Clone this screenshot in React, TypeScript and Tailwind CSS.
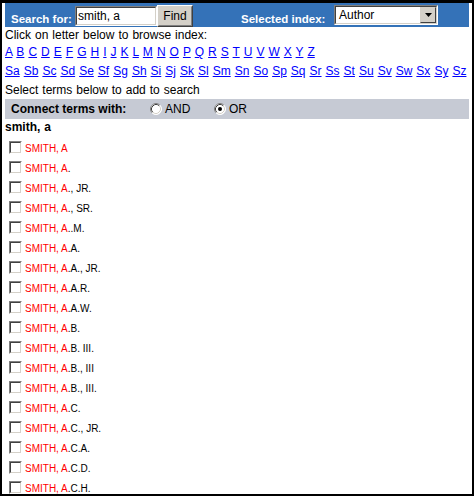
import React, { Fragment } from "react";

const Checkbox = () => (
  <span className="mt-[2px] ml-[4px] box-border block h-[13px] w-[13px] shrink-0 border border-solid border-t-[#808080] border-l-[#808080] border-b-white border-r-white">
    <span className="box-border block h-full w-full border border-solid border-t-[#404040] border-l-[#404040] border-b-[#d4d0c8] border-r-[#d4d0c8] bg-white" />
  </span>
);

const Radio = ({ checked }: { checked?: boolean }) => (
  <svg width="12" height="12" viewBox="0 0 12 12" className="block shrink-0">
    <circle cx="6" cy="6" r="5.5" fill="#ffffff" />
    <path d="M2.11 9.89 A5.5 5.5 0 0 1 9.89 2.11" fill="none" stroke="#808080" strokeWidth="1" />
    <path d="M9.89 2.11 A5.5 5.5 0 0 1 2.11 9.89" fill="none" stroke="#ffffff" strokeWidth="1" />
    <path d="M2.82 9.18 A4.5 4.5 0 0 1 9.18 2.82" fill="none" stroke="#404040" strokeWidth="1" />
    <path d="M9.18 2.82 A4.5 4.5 0 0 1 2.82 9.18" fill="none" stroke="#d4d0c8" strokeWidth="1" />
    {checked && <circle cx="6" cy="6" r="2" fill="#000000" />}
  </svg>
);

const letters = "ABCDEFGHIJKLMNOPQRSTUVWXYZ".split("");
const sLetters = "abcdefghijklmnopqrstuvwxyz".split("").map((c) => "S" + c);

const entries = [
  "",
  ".",
  "., JR.",
  "., SR.",
  "..M.",
  ".A.",
  ".A., JR.",
  ".A.R.",
  ".A.W.",
  ".B.",
  ".B. III.",
  ".B., III",
  ".B., III.",
  ".C.",
  ".C., JR.",
  ".C.A.",
  ".C.D.",
  ".C.H.",
];

const LinkRow = ({ items }: { items: string[] }) => (
  <div className="whitespace-nowrap text-[12px] leading-[19px] [word-spacing:0.67px]">
    {items.map((l, i) => (
      <Fragment key={l}>
        {i > 0 && " "}
        <a href="#" className="text-[#0000ff] underline">
          {l}
        </a>
      </Fragment>
    ))}
  </div>
);

export default function App() {
  return (
    <div className="box-border h-[496px] w-[474px] overflow-hidden border-solid border-black border-t-[3px] border-x-2 border-b-2 bg-white px-[3px] text-black [font-family:'Liberation_Sans',Arial,sans-serif]">
      {/* header bar */}
      <div className="flex h-[24px] items-start bg-[#3472b8]">
        <span className="ml-[6px] mt-[8px] w-[64px] text-[11.5px] font-bold leading-[16px] text-white">
          Search for:
        </span>
        <div className="mt-[3px] box-border h-[20px] w-[82px] border border-solid border-t-[#808080] border-l-[#808080] border-b-white border-r-white">
          <div className="box-border flex h-full w-full items-center border border-solid border-t-[#404040] border-l-[#404040] border-b-[#d4d0c8] border-r-[#d4d0c8] bg-white pl-[1px] text-[12px] leading-[14px]">
            smith, a
          </div>
        </div>
        <div className="mt-[2px] box-border h-[22px] w-[36px] border border-solid border-t-white border-l-white border-b-[#404040] border-r-[#404040]">
          <div className="box-border flex h-full w-full items-center justify-center border border-solid border-t-[#d4d0c8] border-l-[#d4d0c8] border-b-[#808080] border-r-[#808080] bg-[#d4d0c8] text-[12px] leading-[14px]">
            Find
          </div>
        </div>
        <span className="ml-[48px] mt-[8px] w-[93px] text-[11.5px] font-bold leading-[16px] text-white">
          Selected index:
        </span>
        <div className="mt-[2px] box-border h-[20px] w-[104px] border border-solid border-t-[#808080] border-l-[#808080] border-b-white border-r-white">
          <div className="box-border flex h-full w-full items-stretch border border-solid border-t-[#404040] border-l-[#404040] border-b-[#d4d0c8] border-r-[#d4d0c8] bg-white">
            <span className="flex flex-1 items-center pl-[3px] text-[12px] leading-[14px]">Author</span>
            <span className="box-border flex w-[16px] items-center justify-center border border-solid border-t-[#d4d0c8] border-l-[#d4d0c8] border-b-[#404040] border-r-[#404040] bg-[#d4d0c8]">
              <svg width="7" height="4" viewBox="0 0 7 4" className="block">
                <path d="M0 0 H7 L3.5 4 Z" fill="#000000" />
              </svg>
            </span>
          </div>
        </div>
      </div>

      <div className="text-[12px] leading-[16px] [word-spacing:0.67px]">
        Click on letter below to browse index:
      </div>
      <LinkRow items={letters} />
      <LinkRow items={sLetters} />
      <div className="pt-[1px] text-[12px] leading-[17px] [word-spacing:0.67px]">
        Select terms below to add to search
      </div>

      {/* connect bar */}
      <div className="flex h-[20px] items-center bg-[#c6cad4] text-[12px] leading-[14px]">
        <span className="ml-[6px] w-[139px] font-bold">Connect terms with:</span>
        <Radio />
        <span className="ml-[3px] w-[49px]">AND</span>
        <Radio checked />
        <span className="ml-[3px]">OR</span>
      </div>

      <div className="mb-[3px] text-[12px] font-bold leading-[17px] [word-spacing:0.67px]">smith, a</div>

      {entries.map((suffix, i) => (
        <div key={i} className="flex h-[20px] items-start">
          <Checkbox />
          <span className="ml-[3px] whitespace-nowrap text-[10px] leading-[20px]">
            <span className="text-[#ff0000]">SMITH, A</span>
            {suffix}
          </span>
        </div>
      ))}
    </div>
  );
}
